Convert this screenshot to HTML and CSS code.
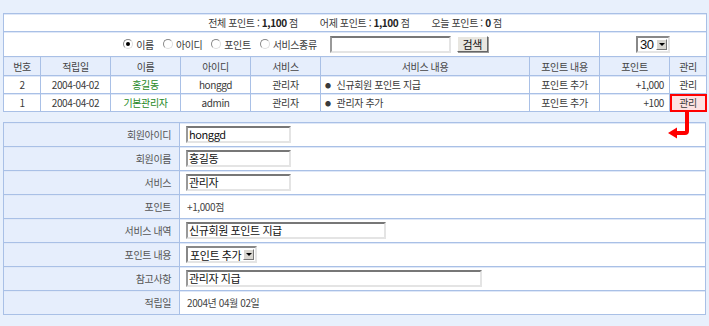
FILE: index.html
```html
<!DOCTYPE html>
<html lang="ko">
<head>
    <meta charset="UTF-8" />
    <title>포인트 관리</title>
    <link rel="stylesheet" href="styles.css">
</head>
<body>
    <!--포인트 목록-->
    <table class="list">
        <colgroup>
            <col style="width:37px"><col style="width:70px"><col style="width:70px">
            <col style="width:70px"><col style="width:70px"><col style="width:209px">
            <col style="width:70px"><col style="width:70px"><col style="width:37px">
        </colgroup>
        <tr class="stat">
            <td colspan="9">
                전체 포인트 : <b>1,100</b> 점<span class="sp"></span>어제 포인트 : <b>1,100</b> 점<span class="sp"></span>오늘 포인트 : <b>0</b> 점
            </td>
        </tr>
        <tr class="search">
            <td colspan="7">
                <div class="sbox">
                    <span class="radio on"></span>이름
                    <span class="radio"></span>아이디
                    <span class="radio"></span>포인트
                    <span class="radio"></span>서비스종류
                    <span class="field wide"></span>
                    <span class="btn">검색</span>
                </div>
            </td>
            <td colspan="2">
                <span class="sel num">30<span class="drop"></span></span>
            </td>
        </tr>
        <tr class="head">
            <td>번호</td><td>적립일</td><td>이름</td><td>아이디</td><td>서비스</td>
            <td>서비스 내용</td><td>포인트 내용</td><td>포인트</td><td>관리</td>
        </tr>
        <tr class="row">
            <td>2</td><td>2004-04-02</td><td class="name">홍길동</td><td>honggd</td><td>관리자</td>
            <td class="left"><span class="dot">●</span>신규회원 포인트 지급</td><td>포인트 추가</td>
            <td class="right">+1,000</td><td>관리</td>
        </tr>
        <tr class="row">
            <td>1</td><td>2004-04-02</td><td class="name">기본관리자</td><td>admin</td><td>관리자</td>
            <td class="left"><span class="dot">●</span>관리자 추가</td><td>포인트 추가</td>
            <td class="right">+100</td><td class="pick">관리</td>
        </tr>
    </table>

    <svg class="arrow" width="30" height="30" viewBox="0 0 30 30">
        <path d="M24 0 V19 Q24 21 22 21 H13" fill="none" stroke="#ff0000" stroke-width="4"/>
        <polygon points="5,21 14,15.5 14,26.5" fill="#ff0000"/>
    </svg>

    <!--상세 정보-->
    <table class="form">
        <colgroup>
            <col style="width:176px"><col>
        </colgroup>
        <tr><th>회원아이디</th><td><span class="field s">honggd</span></td></tr>
        <tr><th>회원이름</th><td><span class="field s">홍길동</span></td></tr>
        <tr><th>서비스</th><td><span class="field s">관리자</span></td></tr>
        <tr><th>포인트</th><td class="txt">+1,000점</td></tr>
        <tr><th>서비스 내역</th><td><span class="field m">신규회원 포인트 지급</span></td></tr>
        <tr><th>포인트 내용</th><td><span class="sel">포인트 추가<span class="drop"></span></span></td></tr>
        <tr><th>참고사항</th><td><span class="field l">관리자 지급</span></td></tr>
        <tr><th>적립일</th><td class="txt">2004년 04월 02일</td></tr>
    </table>
</body>
</html>
```

FILE: styles.css
```css
*{
    margin:0;
    padding:0;
}
body{
    background:#e8f0fc;
    padding:13px 3px 0 3px;
    font-family:"Noto Sans CJK KR","Liberation Sans",sans-serif;
    font-size:10px;
    letter-spacing:-0.4px;
    color:#3a3a3a;
    position:relative;
}
table{
    border-collapse:collapse;
    background:#fff;
    table-layout:fixed;
}
td,th{
    border:1px solid #a9c0e6;
    font-weight:normal;
    white-space:nowrap;
}
.list{
    width:703px;
    text-align:center;
}
.list td{
    box-shadow:inset 0 1px 0 #dfe8f8;
}
.stat td{
    height:17px;
}
.stat b{
    font-weight:bold;
    color:#222;
}
.sp{
    display:inline-block;
    width:22px;
}
.search td{
    height:24px;
}
.sbox{
    display:flex;
    align-items:center;
    justify-content:center;
    gap:3px;
    padding-left:2px;
}
.radio{
    display:inline-block;
    width:8px;
    height:8px;
    border:1px solid #888;
    border-right-color:#ddd;
    border-bottom-color:#ddd;
    border-radius:50%;
    background:#fff;
    margin-left:6px;
    position:relative;
}
.radio.on::after{
    content:"";
    position:absolute;
    left:2px;
    top:2px;
    width:4px;
    height:4px;
    border-radius:50%;
    background:#000;
}
.field{
    display:inline-block;
    height:13px;
    line-height:13px;
    border:2px solid #777;
    border-right-color:#e4e4e4;
    border-bottom-color:#e4e4e4;
    border-left-color:#999;
    background:#fff;
    padding-left:1px;
    color:#111;
    text-align:left;
    vertical-align:middle;
    font-size:11px;
}
.field.wide{
    width:116px;
    margin-left:10px;
}
.btn{
    display:inline-block;
    width:29px;
    height:14px;
    line-height:14px;
    background:#e8e6e0;
    border:1px solid #fff;
    border-right-color:#666;
    border-bottom-color:#666;
    box-shadow:1px 1px 0 #999;
    text-align:center;
    color:#111;
    margin-left:3px;
    font-size:11px;
}
.sel{
    display:inline-flex;
    align-items:center;
    height:13px;
    border:2px solid #888;
    border-right-color:#e4e4e4;
    border-bottom-color:#e4e4e4;
    background:#fff;
    padding-left:2px;
    color:#111;
    vertical-align:middle;
    font-size:11px;
    gap:2px;
}
.sel.num{
    width:28px;
    font-family:"Liberation Sans",sans-serif;
    font-size:13px;
    justify-content:space-between;
}
.drop{
    display:inline-block;
    width:11px;
    height:11px;
    margin-right:1px;
    background:#d8d6d0;
    border:1px solid #fff;
    border-right-color:#777;
    border-bottom-color:#777;
    position:relative;
    box-sizing:border-box;
}
.drop::after{
    content:"";
    position:absolute;
    left:2px;
    top:3px;
    border-left:3px solid transparent;
    border-right:3px solid transparent;
    border-top:3px solid #000;
}
.head td{
    height:18px;
    background:#e6eefc;
    color:#444;
}
.row td{
    height:17px;
}
.name{
    color:#1f8a1f;
}
.left{
    text-align:left;
    padding-left:4px;
}
.dot{
    font-size:6px;
    margin-right:6px;
    vertical-align:1px;
}
.right{
    text-align:right;
    padding-right:5px;
}
.list .pick{
    background:#fde2e2;
    outline:2px solid #f00;
    outline-offset:-2px;
    box-shadow:none;
}
.arrow{
    position:absolute;
    left:663px;
    top:112px;
}
.form{
    width:703px;
    margin-top:10px;
}
.form th{
    height:23px;
    background:#e6eefc;
    text-align:right;
    padding-right:8px;
    color:#555;
    box-shadow:inset 0 1px 0 #dfe8f8;
}
.form td{
    padding-left:6px;
    box-shadow:inset 0 1px 0 #dfe8f8;
}
.form .txt{
    padding-left:7px;
    color:#444;
}
.field.s{
    width:100px;
}
.field.m{
    width:195px;
}
.field.l{
    width:291px;
}
```
